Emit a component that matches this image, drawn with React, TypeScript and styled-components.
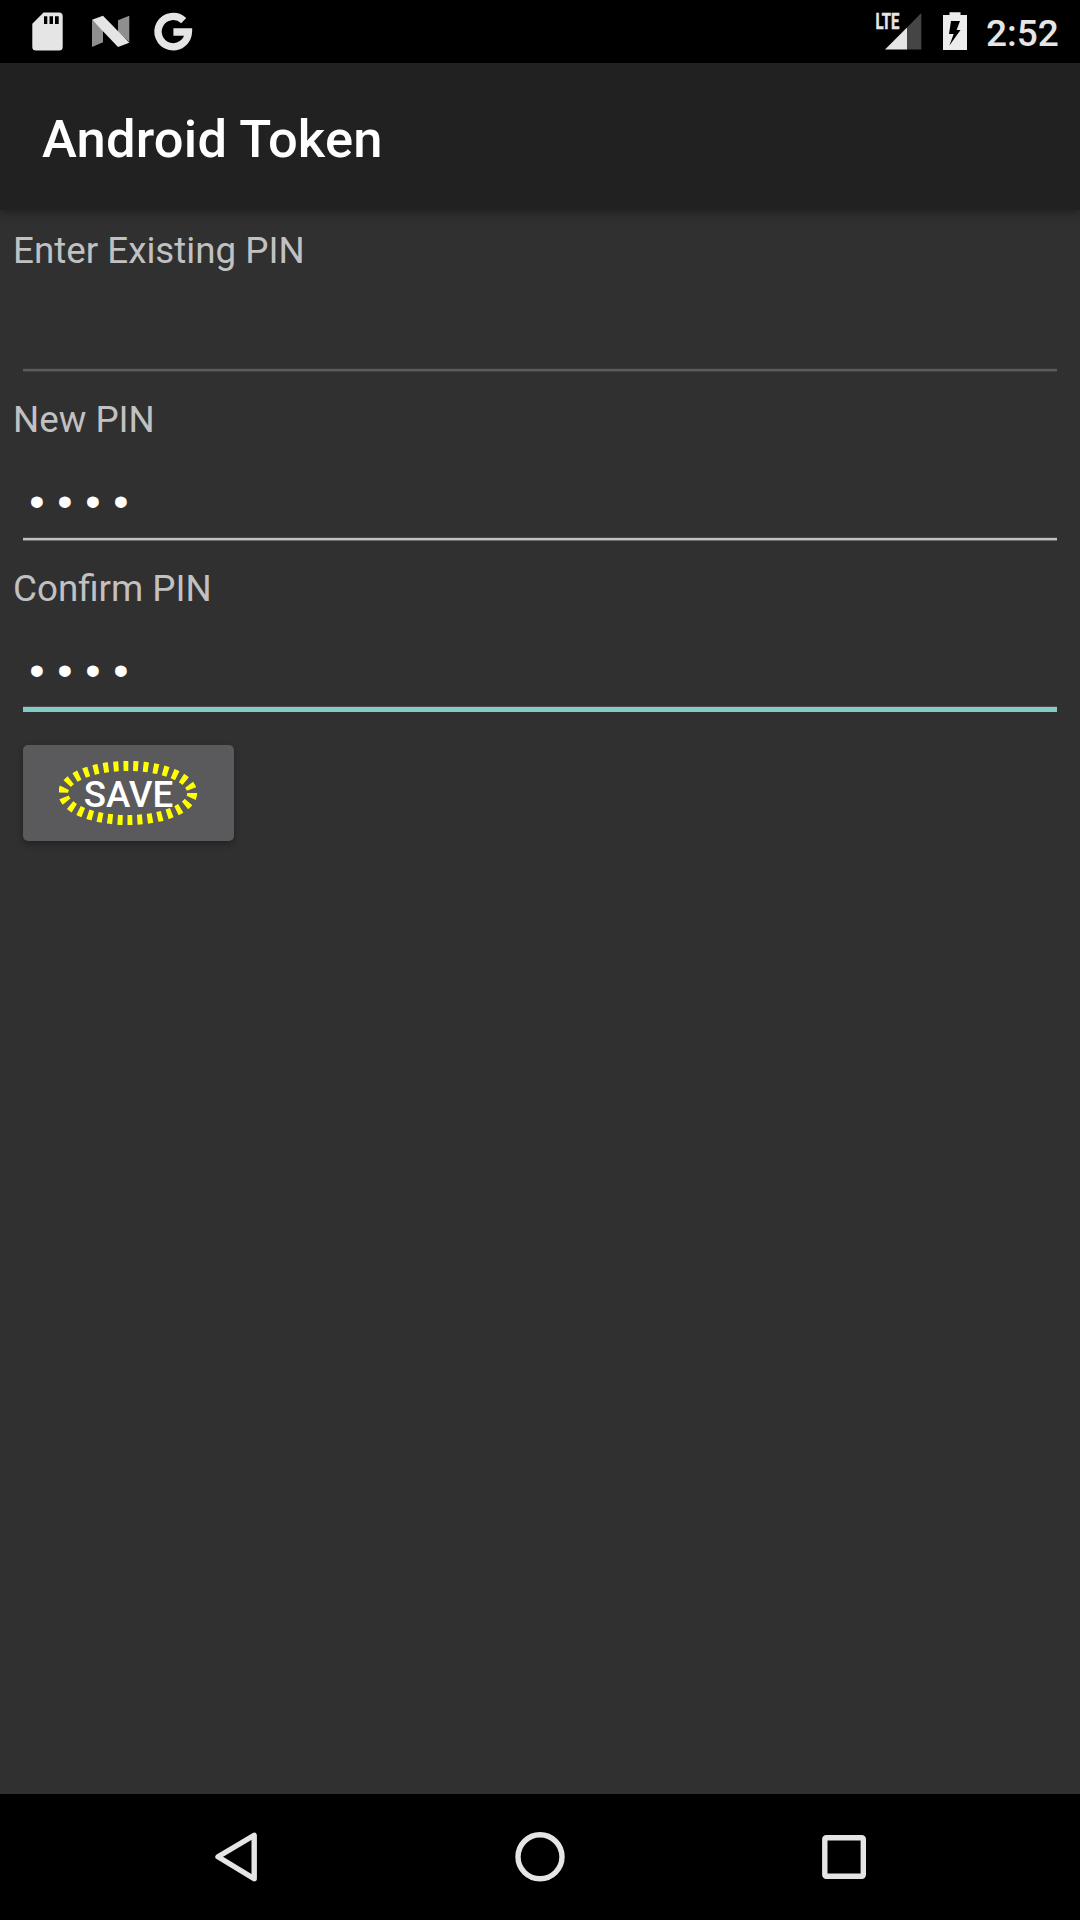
import React from 'react';
import styled, { createGlobalStyle } from 'styled-components';

const Global = createGlobalStyle`
  * { box-sizing: border-box; }
  body { margin: 0; background: #303030; font-family: Roboto, "Noto Sans", sans-serif; }
`;

const Screen = styled.div`
  width: 1080px;
  height: 1920px;
  display: flex;
  flex-direction: column;
  background: #303030;
  overflow: hidden;
`;

const StatusBar = styled.header`
  height: 63px;
  flex: none;
  display: flex;
  justify-content: space-between;
  background: #000;
`;

const Tray = styled.div`
  display: flex;
  align-items: flex-start;
`;

const Glyph = styled.svg`
  display: block;
  flex: none;
`;

const Clock = styled.time`
  width: 94px;
  font-size: 37px;
  font-weight: 500;
  line-height: 43px;
  padding-top: 12px;
  color: #e5e5e5;
`;

const AppBar = styled.div`
  height: 147px;
  flex: none;
  display: flex;
  align-items: center;
  padding: 5px 42px 0;
  background: #212121;
  box-shadow: 0 3px 9px rgba(0, 0, 0, 0.35);
`;

const Title = styled.h1`
  margin: 0;
  font-size: 52.5px;
  font-weight: 500;
  line-height: 62px;
  letter-spacing: 0.2px;
  color: #fff;
`;

const Form = styled.form`
  flex: 1;
  display: flex;
  flex-direction: column;
  align-items: stretch;
  padding: 13px 13px 0;
`;

const Field = styled.label`
  height: 169px;
  display: flex;
  flex-direction: column;
`;

const Caption = styled.span`
  font-size: 36.75px;
  line-height: 56px;
  color: #c1c1c1;
`;

type EntryState = 'empty' | 'filled' | 'focused';

const underline: Record<EntryState, { size: number; color: string; above: string; below: string }> = {
  empty: { size: 2, color: '#5c5c5c', above: '#363636', below: '#424242' },
  filled: { size: 2, color: '#c1c1c1', above: '#484848', below: '#6e6e6e' },
  focused: { size: 5, color: '#80cbc4', above: '#484848', below: '#303030' },
};

const Entry = styled.span<{ $state: EntryState }>`
  height: ${p => 90 + underline[p.$state].size}px;
  margin: 0 10px;
  padding: 15px 0 0 1px;
  font-family: "Liberation Mono", monospace;
  font-size: 43px;
  letter-spacing: 2.2px;
  line-height: 70px;
  color: #fff;
  border-bottom: ${p => `${underline[p.$state].size}px solid ${underline[p.$state].color}`};
  box-shadow: inset 0 -1px 0 ${p => underline[p.$state].above}, 0 1px 0 ${p => underline[p.$state].below};
`;

const Secret = styled.span`
  display: block;
  padding-top: 7px;
`;

const SaveButton = styled.button`
  width: 211px;
  height: 96px;
  margin: 15px 0 0 10px;
  padding: 0;
  border: 0;
  border-radius: 5px;
  background: #5a595b;
  box-shadow: 0 3px 6px rgba(0, 0, 0, 0.3);
  display: grid;
  place-items: center;
`;

const SaveLabel = styled.span`
  grid-area: 1 / 1;
  padding-top: 4px;
  font: 500 36.75px/44px Roboto, "Noto Sans", sans-serif;
  color: #fff;
`;

const Marker = styled.svg`
  grid-area: 1 / 1;
`;

const NavBar = styled.nav`
  height: 126px;
  flex: none;
  background: #000;
  display: flex;
  justify-content: center;
  align-items: center;
  gap: 204px;
`;

export default function App() {
  return (
    <Screen>
      <Global />
      <StatusBar>
        <Tray>
          <Glyph width="200" height="63" viewBox="0 0 200 63">
            <path fill="#e5e5e5" fillRule="evenodd" d="M43.5 12.5H59Q62.7 12.5 62.7 16V47Q62.7 50.5 59 50.5H36Q32.3 50.5 32.3 47V23.7ZM44 16.3V24H47.3V16.3ZM49.5 16.3V24H53V16.3ZM55 16.3V24H58.7V16.3Z" />
            <path fill="#8f8f8f" d="M92 20 103 30V42.3L92 47ZM118 20.3 129.3 15.7V42L118 32Z" />
            <path fill="#e5e5e5" d="M92 19.7 103 15.7 129.3 42.7 118 47Z" />
            <path fill="none" stroke="#e5e5e5" strokeWidth="7.4" d="M183.7 20.6A15.2 15.2 0 1 0 188.4 32H173.4" />
          </Glyph>
        </Tray>
        <Tray>
          <Glyph width="111" height="63" viewBox="875 0 111 63">
            <path fill="#e5e5e5" d="M885 49.5 907 27.5V49.5Z" />
            <path fill="#454545" d="M907 27.5 921.3 13V49.5H907Z" />
            <text x="875.4" y="28.8" fill="#e5e5e5" stroke="#e5e5e5" strokeWidth="0.5" fontFamily="Roboto, sans-serif" fontWeight="700" fontSize="21.6" textLength="24" lengthAdjust="spacingAndGlyphs">LTE</text>
            <path fill="#ececec" fillRule="evenodd" d="M949.5 12.3H960.5V15H967V50H943V15H949.5ZM951 21 949 34H953.7L949.3 45.7 960.5 30H956.6L960 21Z" />
          </Glyph>
          <Clock>2:52</Clock>
        </Tray>
      </StatusBar>
      <AppBar>
        <Title>Android Token</Title>
      </AppBar>
      <Form>
        <Field>
          <Caption>Enter Existing PIN</Caption>
          <Entry $state="empty" />
        </Field>
        <Field>
          <Caption>New PIN</Caption>
          <Entry $state="filled">
            <Secret>••••</Secret>
          </Entry>
        </Field>
        <Field>
          <Caption>Confirm PIN</Caption>
          <Entry $state="focused">
            <Secret>••••</Secret>
          </Entry>
        </Field>
        <SaveButton type="button">
          <SaveLabel>SAVE</SaveLabel>
          <Marker width="140" height="66" viewBox="0 0 140 66">
            <ellipse cx="68.7" cy="33" rx="64.5" ry="27" fill="none" stroke="#ff0" strokeWidth="10" strokeDasharray="5 5" />
          </Marker>
        </SaveButton>
      </Form>
      <NavBar>
        <Glyph width="100" height="100" viewBox="0 0 100 100">
          <path fill="none" stroke="#e5e5e5" strokeWidth="5.4" strokeLinejoin="round" d="M32 49.8 68.2 28.3V71.7Z" />
        </Glyph>
        <Glyph width="100" height="100" viewBox="0 0 100 100">
          <circle cx="50" cy="49.8" r="22" fill="none" stroke="#e5e5e5" strokeWidth="5.4" />
        </Glyph>
        <Glyph width="100" height="100" viewBox="0 0 100 100">
          <rect x="30.8" y="30.8" width="38.5" height="38.5" rx="1.5" fill="none" stroke="#e5e5e5" strokeWidth="5.4" />
        </Glyph>
      </NavBar>
    </Screen>
  );
}
